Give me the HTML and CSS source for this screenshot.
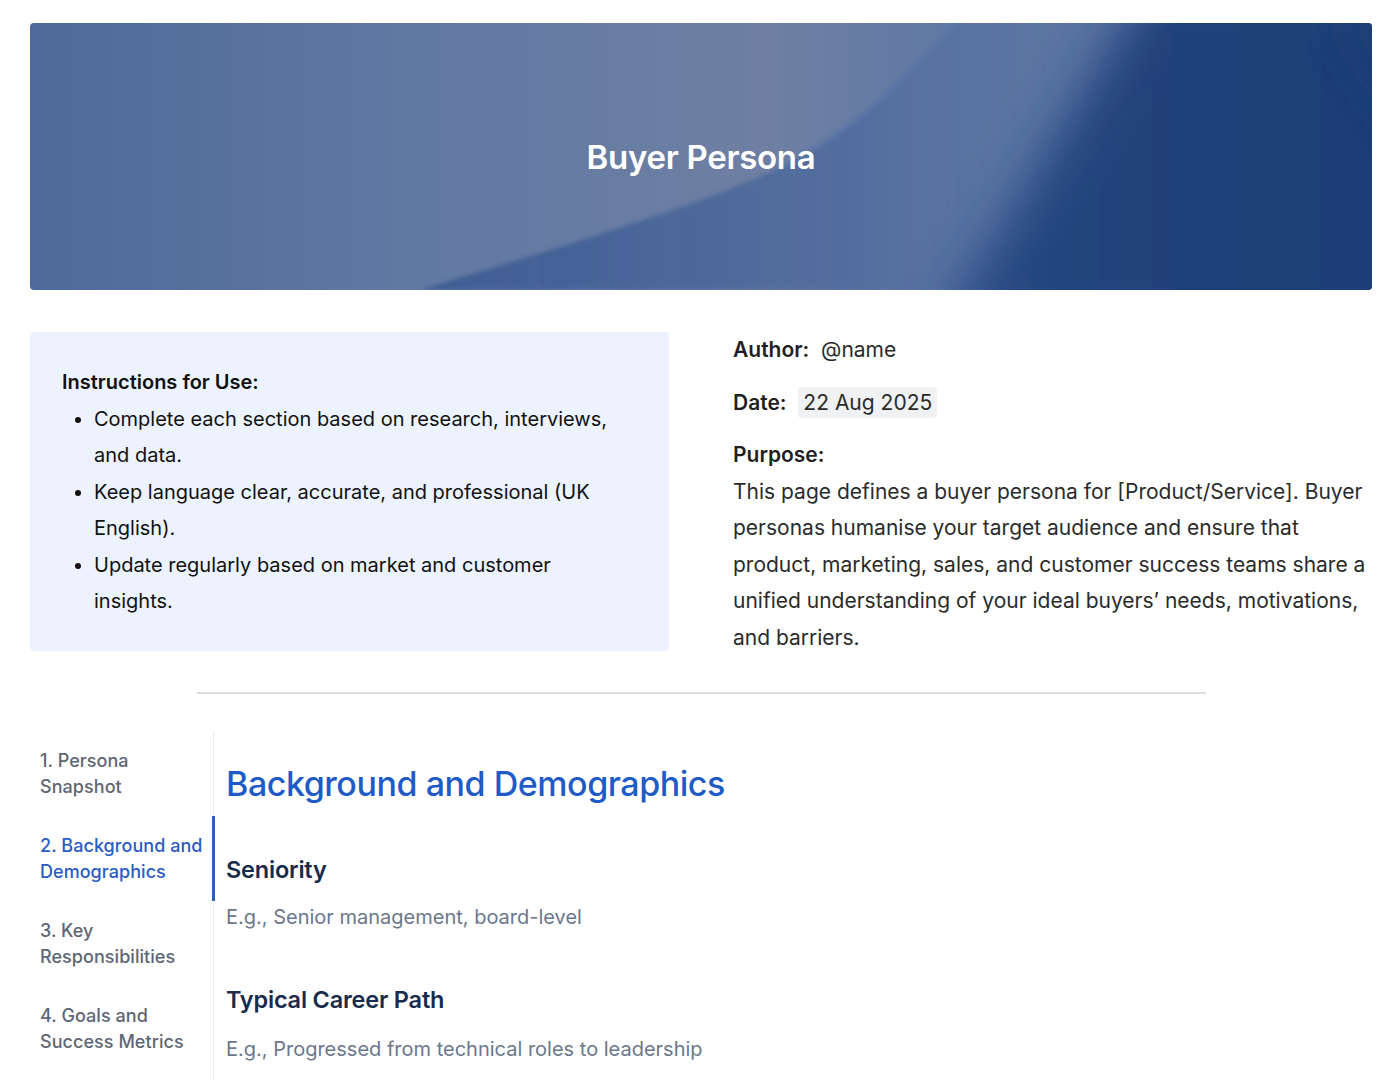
FILE: index.html
```html
<!DOCTYPE html>
<html lang="en">
<head>
<meta charset="utf-8">
<title>Buyer Persona</title>
<link rel="stylesheet" href="styles.css">
</head>
<body>
<div class="page">
  <header class="banner">
    <svg class="banner-bg" viewBox="0 0 1342 267" preserveAspectRatio="none" xmlns="http://www.w3.org/2000/svg">
      <defs>
        <linearGradient id="base" x1="0" y1="0" x2="1" y2="0">
          <stop offset="0" stop-color="#4e6a9a"/>
          <stop offset="0.3" stop-color="#6279a3"/>
          <stop offset="0.55" stop-color="#6e7fa2"/>
          <stop offset="0.7" stop-color="#5f78a4"/>
          <stop offset="1" stop-color="#5570a0"/>
        </linearGradient>
        <linearGradient id="under" x1="0" y1="0" x2="1" y2="0">
          <stop offset="0" stop-color="#3b5a90" stop-opacity="0.9"/>
          <stop offset="0.45" stop-color="#41609a" stop-opacity="0.55"/>
          <stop offset="0.7" stop-color="#5a73a2" stop-opacity="0.1"/>
          <stop offset="1" stop-color="#5a73a2" stop-opacity="0"/>
        </linearGradient>
        <linearGradient id="dark" x1="0" y1="0" x2="1" y2="0">
          <stop offset="0" stop-color="#284a85"/>
          <stop offset="0.5" stop-color="#1f4079"/>
          <stop offset="1" stop-color="#1d3d76"/>
        </linearGradient>
        <filter id="soft" x="-20%" y="-20%" width="140%" height="140%">
          <feGaussianBlur stdDeviation="26"/>
        </filter>
        <filter id="edge" x="-10%" y="-10%" width="120%" height="120%">
          <feGaussianBlur stdDeviation="2"/>
        </filter>
      </defs>
      <rect width="1342" height="267" fill="url(#base)"/>
      <path d="M390 267 C 560 215, 700 172, 770 135 C 840 95, 890 40, 925 0 L 1342 0 L 1342 267 Z" fill="url(#under)" filter="url(#edge)"/>
      <path d="M925 0 C 890 40, 840 95, 770 135" stroke="#5877ae" stroke-width="3" fill="none" opacity="0.7" filter="url(#edge)"/>
      <path d="M900 320 L 1120 -40 L 1420 -40 L 1420 320 Z" fill="url(#dark)" filter="url(#soft)"/>
      <path d="M1300 -20 L 1400 -20 L 1400 120 Z" fill="#1d3d76" filter="url(#soft)"/>
    </svg>
    <h1 class="banner-title">Buyer Persona</h1>
  </header>

  <section class="intro">
    <div class="panel">
      <p class="panel-title">Instructions for Use:</p>
      <ul class="panel-list">
        <li>Complete each section based on research, interviews, and data.</li>
        <li>Keep language clear, accurate, and professional (UK English).</li>
        <li>Update regularly based on market and customer insights.</li>
      </ul>
    </div>
    <div class="meta">
      <p class="meta-row"><strong>Author:</strong>&nbsp; @name</p>
      <p class="meta-row"><strong>Date:</strong>&nbsp; <span class="chip">22 Aug 2025</span></p>
      <p class="meta-label"><strong>Purpose:</strong></p>
      <p class="meta-text">This page defines a buyer persona for [Product/Service]. Buyer personas humanise your target audience and ensure that product, marketing, sales, and customer success teams share a unified understanding of your ideal buyers’ needs, motivations, and barriers.</p>
    </div>
  </section>

  <hr class="divider">

  <section class="doc">
    <nav class="toc">
      <a class="toc-item">1. Persona Snapshot</a>
      <a class="toc-item active">2. Background and Demographics</a>
      <a class="toc-item">3. Key Responsibilities</a>
      <a class="toc-item">4. Goals and Success Metrics</a>
    </nav>
    <main class="content">
      <h2 class="section-title">Background and Demographics</h2>
      <h3 class="field-title">Seniority</h3>
      <p class="field-text">E.g., Senior management, board-level</p>
      <h3 class="field-title">Typical Career Path</h3>
      <p class="field-text">E.g., Progressed from technical roles to leadership</p>
    </main>
  </section>
</div>
</body>
</html>
```
FILE: styles.css
```css
* { box-sizing: border-box; }

html, body {
  margin: 0;
  padding: 0;
  background: #ffffff;
}

body {
  font-family: Inter, "Noto Sans", "Liberation Sans", sans-serif;
  color: #1c1c1e;
  height: 1080px;
  overflow: hidden;
}

.page {
  padding: 23px 28px 0 30px;
}

/* Banner */
.banner {
  display: grid;
  height: 267px;
  border-radius: 4px;
  overflow: hidden;
}

.banner-bg,
.banner-title {
  grid-area: 1 / 1;
}

.banner-bg {
  width: 100%;
  height: 267px;
  display: block;
}

.banner-title {
  margin: 0;
  align-self: center;
  justify-self: center;
  color: #ffffff;
  font-size: 33px;
  font-weight: 600;
  letter-spacing: -0.3px;
}

/* Intro */
.intro {
  display: grid;
  grid-template-columns: 639px 1fr;
  gap: 64px;
  margin-top: 42px;
  align-items: start;
}

.panel {
  background: #ecf2fe;
  border-radius: 4px;
  padding: 32px 48px 31px 32px;
  font-size: 20px;
  line-height: 36.5px;
  color: #111111;
}

.panel-title {
  margin: 0;
  font-weight: 600;
}

.panel-list {
  margin: 0;
  padding-left: 32px;
}

.meta {
  font-size: 21px;
  line-height: 36.5px;
  color: #2b2b2b;
}

.meta strong {
  font-weight: 600;
  color: #1f1f1f;
}

.meta-row {
  margin: 0 0 16px 0;
}

.meta-label {
  margin: 0;
}

.meta-text {
  margin: 0;
}

.chip {
  background: #f0f1f2;
  border-radius: 4px;
  padding: 3px 5px;
}

/* Divider */
.divider {
  width: 1009px;
  margin: 36px auto 37px auto;
  border: 0;
  height: 2px;
  background: #dddddd;
}

/* Document */
.doc {
  display: grid;
  grid-template-columns: 184px 1fr;
}

.toc {
  border-right: 1px solid #ebecf0;
  padding-left: 10px;
  min-height: 360px;
  display: flex;
  flex-direction: column;
}

.toc-item {
  display: block;
  padding: 16.5px 3px 16.5px 0;
  font-size: 18px;
  line-height: 26px;
  font-weight: 500;
  color: #5e6675;
  letter-spacing: 0.05px;
  margin-right: -2px;
  border-right: 3px solid transparent;
}

.toc-item.active {
  color: #2a5bc5;
  border-right-color: #2c5ec7;
}

.content {
  padding-left: 12px;
}

.section-title {
  margin: 31px 0 0 0;
  font-size: 34px;
  line-height: 44px;
  font-weight: 500;
  color: #1f5bc7;
  letter-spacing: -0.45px;
}

.field-title {
  margin: 48px 0 0 0;
  font-size: 23.5px;
  line-height: 32px;
  font-weight: 600;
  color: #172b4d;
  letter-spacing: -0.2px;
}

.field-text {
  margin: 16px 0 0 0;
  font-size: 20px;
  line-height: 30px;
  color: #6b778c;
}

.field-text + .field-title {
  margin-top: 52px;
}

.field-text:last-child {
  margin-top: 18px;
}
```
